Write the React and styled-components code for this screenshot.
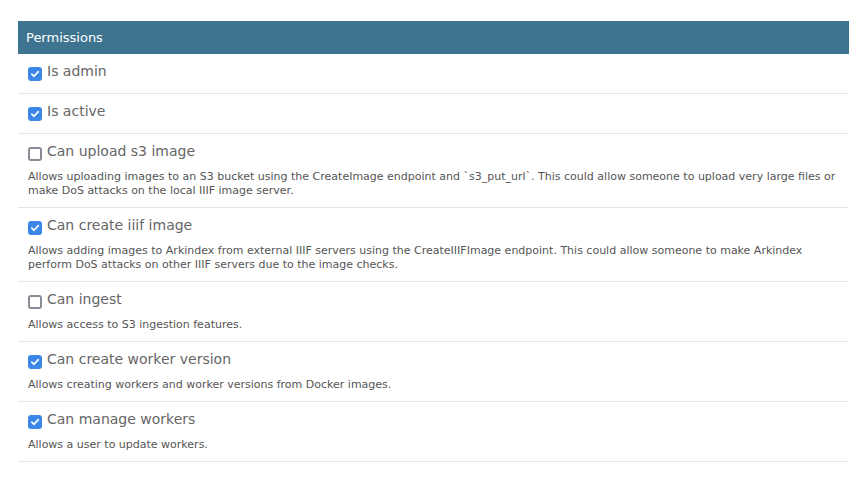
import React from "react";
import styled, { createGlobalStyle } from "styled-components";

const GlobalStyle = createGlobalStyle`
    body {
        margin: 0;
        background: #fff;
        font-family: "DejaVu Sans", Verdana, sans-serif;
    }
`;

const permissions = [
    { name: "Is admin", checked: true },
    { name: "Is active", checked: true },
    {
        name: "Can upload s3 image",
        checked: false,
        help: "Allows uploading images to an S3 bucket using the CreateImage endpoint and `s3_put_url`. This could allow someone to upload very large files or make DoS attacks on the local IIIF image server.",
    },
    {
        name: "Can create iiif image",
        checked: true,
        help: "Allows adding images to Arkindex from external IIIF servers using the CreateIIIFImage endpoint. This could allow someone to make Arkindex perform DoS attacks on other IIIF servers due to the image checks.",
    },
    { name: "Can ingest", checked: false, help: "Allows access to S3 ingestion features." },
    {
        name: "Can create worker version",
        checked: true,
        help: "Allows creating workers and worker versions from Docker images.",
    },
    { name: "Can manage workers", checked: true, help: "Allows a user to update workers." },
];

const Checkbox = ({ checked }) => (
    <Box checked={checked}>
        {checked && (
            <svg width="10" height="10" viewBox="0 0 10 10">
                <path d="M1.8 5.2 L4 7.3 L8.3 2.6" fill="none" stroke="#fff" strokeWidth="1.7" strokeLinecap="round" strokeLinejoin="round" />
            </svg>
        )}
    </Box>
);

const App = () => {
    return (
        <>
            <GlobalStyle />
            <Wrapper>
                <Header>Permissions</Header>
                {permissions.map((p) => (
                    <Row key={p.name}>
                        <Title>
                            <Checkbox checked={p.checked} />
                            <span>{p.name}</span>
                        </Title>
                        {p.help && <Help>{p.help}</Help>}
                    </Row>
                ))}
            </Wrapper>
        </>
    );
};

export default App;

const Wrapper = styled.div`
    width: 831px;
    margin: 21px 0 0 18px;
`;

const Header = styled.div`
    height: 33px;
    box-sizing: border-box;
    padding: 0 8px;
    display: flex;
    align-items: center;
    background-color: #3e7490;
    color: #fff;
    font-size: 13px;
`;

const Row = styled.div`
    padding: 7px 10px 10px;
    border-bottom: 1px solid #e5e5e5;
`;

const Title = styled.label`
    display: flex;
    align-items: flex-start;
    font-size: 14px;
    line-height: 21px;
    color: #666;
    margin-bottom: 1px;
`;

const Box = styled.span`
    flex: none;
    width: 14px;
    height: 14px;
    box-sizing: border-box;
    margin: 6px 5px 0 0;
    border-radius: 3px;
    display: flex;
    align-items: center;
    justify-content: center;
    background: ${(props) => (props.checked ? "#3b86e6" : "#fff")};
    border: ${(props) => (props.checked ? "none" : "2px solid #8b8a94")};
`;

const Help = styled.div`
    margin: 8px 0 -1px;
    font-size: 11px;
    line-height: 14px;
    color: #555;
`;
